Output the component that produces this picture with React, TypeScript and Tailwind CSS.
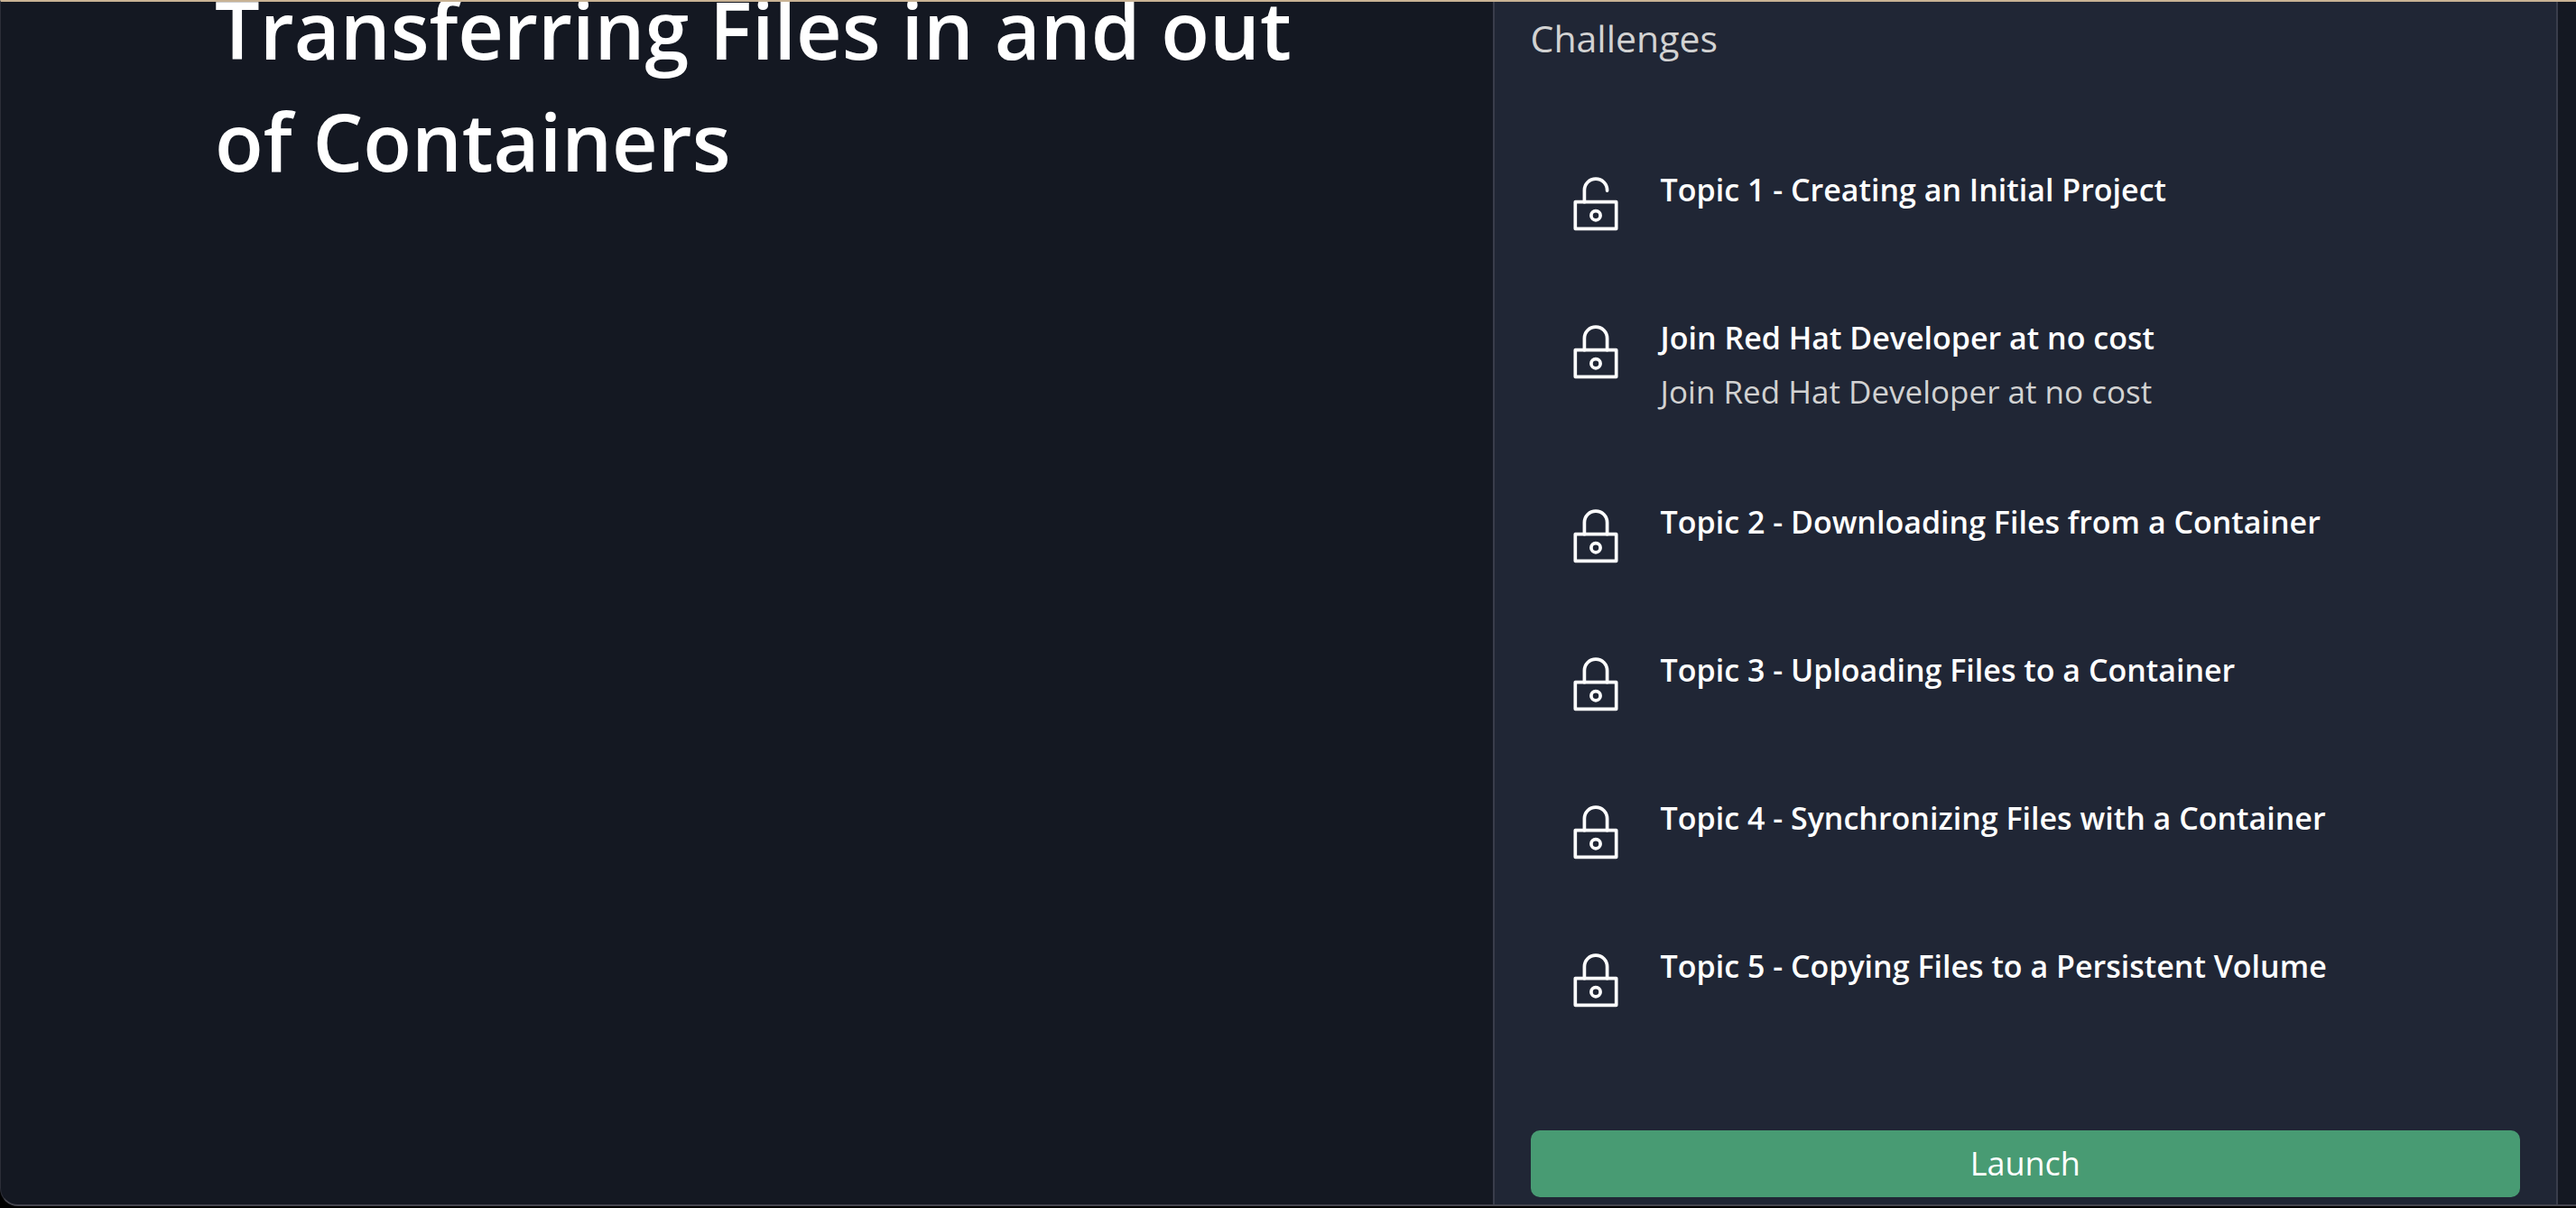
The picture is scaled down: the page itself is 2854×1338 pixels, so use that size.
type Challenge = { title: string; description?: string; unlocked?: boolean };

const challenges: Challenge[] = [
  { title: "Topic 1 - Creating an Initial Project", unlocked: true },
  {
    title: "Join Red Hat Developer at no cost",
    description: "Join Red Hat Developer at no cost",
  },
  { title: "Topic 2 - Downloading Files from a Container" },
  { title: "Topic 3 - Uploading Files to a Container" },
  { title: "Topic 4 - Synchronizing Files with a Container" },
  { title: "Topic 5 - Copying Files to a Persistent Volume" },
];

function LockIcon({ open = false }: { open?: boolean }) {
  return (
    <svg
      viewBox="0 0 56 80"
      className="h-20 w-14 shrink-0"
      fill="none"
      stroke="white"
      strokeWidth="3.7"
      aria-hidden="true"
    >
      <rect x="5.3" y="43.7" width="45.4" height="29.6" strokeLinejoin="round" />
      <path
        d={
          open
            ? "M15.4 43.7V30.7C15.4 23.7 21 18.1 28 18.1S40.6 23.7 40.6 30.7V31.1"
            : "M15.4 43.7V30.7C15.4 23.7 21 18.1 28 18.1S40.6 23.7 40.6 30.7V43.7"
        }
        strokeLinecap="round"
      />
      <circle cx="28" cy="58.7" r="5.1" />
    </svg>
  );
}

export default function App() {
  return (
    <div className="min-h-screen bg-black pb-0.5 font-['Open_Sans',sans-serif] text-white">
      <div className="flex min-h-[calc(100vh-2px)] overflow-hidden rounded-bl-[20px] border-t-2 border-b-2 border-l border-t-[#c9b394] border-b-[#46464f] border-l-[#2c2e38] bg-[#141822] pr-5">
        <main className="min-w-0 flex-1 pr-48 pl-[237px]">
          <h1 className="-mt-8 text-[88px] leading-[124px] font-semibold">
            Transferring Files in and out of Containers
          </h1>
        </main>
        <aside className="flex w-5/12 shrink-0 flex-col border-x-2 border-[#393d4b] bg-[#202635] px-10 pb-2">
          <h2 className="mt-2 text-[41px] leading-[64px] text-[#d2d2d2]">Challenges</h2>
          <ul className="mt-16 grow">
            {challenges.map((c) => (
              <li key={c.title} className="flex gap-11 py-[42px] pl-11">
                <LockIcon open={c.unlocked} />
                <div>
                  <h3 className="text-[34px] leading-[60px] font-semibold">{c.title}</h3>
                  {c.description && (
                    <p className="text-[35px] leading-[60px] text-[#d2d2d2]">
                      {c.description}
                    </p>
                  )}
                </div>
              </li>
            ))}
          </ul>
          <button
            type="button"
            className="h-[74px] w-full rounded-[10px] bg-[#489b73] text-4xl text-white"
          >
            Launch
          </button>
        </aside>
      </div>
    </div>
  );
}
